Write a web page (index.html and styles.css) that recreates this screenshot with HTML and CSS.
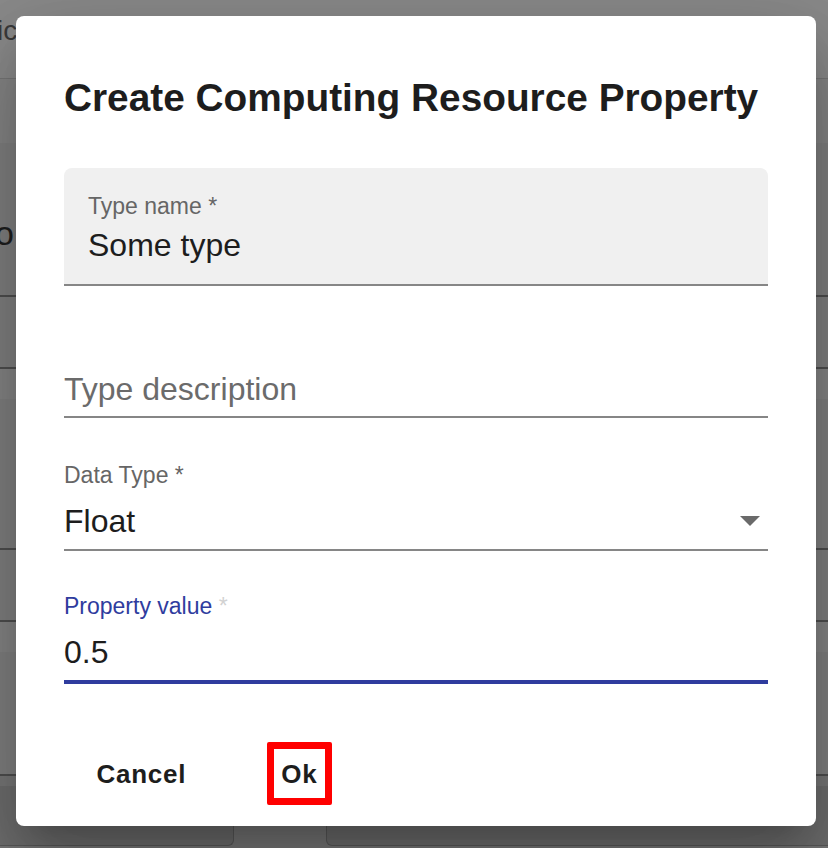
FILE: index.html
```html
<!DOCTYPE html>
<html lang="en">
<head>
<meta charset="utf-8">
<title>Create Computing Resource Property</title>
<link rel="stylesheet" href="styles.css">
</head>
<body>
<div class="page">
  <div class="bg-head"><span class="bg-word">ic</span></div>
  <div class="bg-band-top"></div>
  <div class="bg-row bg-row-first"><span class="bg-word bg-word-o">o</span></div>
  <div class="bg-row bg-row-short"></div>
  <div class="bg-band"></div>
  <div class="bg-row bg-row-mid"></div>
  <div class="bg-row bg-row-short"></div>
  <div class="bg-band"></div>
  <div class="bg-row bg-row-last"></div>
  <div class="bg-foot">
    <div class="bg-card bg-card-a"></div>
    <div class="bg-card bg-card-b"></div>
  </div>
</div>

<div class="dialog" role="dialog">
  <h2 class="title">Create Computing Resource Property</h2>

  <div class="field filled">
    <div class="label">Type name *</div>
    <div class="value">Some type</div>
  </div>

  <div class="field standard">
    <div class="placeholder">Type description</div>
  </div>

  <div class="field select">
    <div class="label">Data Type *</div>
    <div class="value-row">
      <div class="value">Float</div>
      <svg class="arrow" width="20" height="10" viewBox="7 10 10 5"><path d="M7 10l5 5 5-5z" fill="#6a6a6a"/></svg>
    </div>
  </div>

  <div class="field focused">
    <div class="label">Property value <span class="ast">*</span></div>
    <div class="value value-gap">0.5</div>
  </div>

  <div class="actions">
    <button class="btn">Cancel</button>
    <button class="btn btn-ok">Ok</button>
  </div>
</div>
</body>
</html>
```

FILE: styles.css
```css
* {
  box-sizing: border-box;
  margin: 0;
  padding: 0;
}

html, body {
  width: 828px;
  height: 848px;
  overflow: hidden;
}

body {
  font-family: "Liberation Sans", Arial, Helvetica, sans-serif;
  background: #808080;
  position: relative;
}

/* dimmed page behind the modal */
.page {
  height: 848px;
  display: flex;
  flex-direction: column;
}

.page > * {
  flex-shrink: 0;
}

.bg-head {
  height: 79px;
  background: #8a8a8a;
  border-bottom: 1px solid #767676;
  padding-top: 14px;
}

.bg-word {
  display: block;
  font-size: 28px;
  line-height: 34px;
  color: #3a3a3a;
  margin-left: -3px;
}

.bg-word-o {
  font-size: 34px;
  color: #1e1e1e;
  margin-left: -5px;
  padding-top: 73px;
}

.bg-band-top {
  height: 64px;
  background: #858585;
}

.bg-band {
  height: 30px;
  background: #858585;
}

.bg-row {
  background: #808080;
  border-bottom: 2px solid #4f4f4f;
}

.bg-row-first { height: 154px; }
.bg-row-short { height: 72px; }
.bg-row-mid { height: 151px; }
.bg-row-last { height: 124px; }

.page > .bg-foot {
  flex: 1 1 auto;
  position: relative;
  background: #777;
}

.bg-card {
  position: absolute;
  bottom: 2px;
  height: 60px;
  border: 1px solid #5a5a5a;
  border-top: none;
  background: #6e6e6e;
}

.bg-card-a {
  left: -10px;
  width: 244px;
  border-radius: 0 0 6px 0;
}

.bg-card-b {
  left: 326px;
  right: -10px;
  border-radius: 0 0 0 6px;
}

/* modal */
.dialog {
  position: absolute;
  left: 16px;
  top: 16px;
  width: 800px;
  height: 810px;
  background: #fff;
  border-radius: 8px;
  padding: 0 48px 21px;
  display: flex;
  flex-direction: column;
  box-shadow:
    0 22px 30px -14px rgba(0, 0, 0, 0.2),
    0 48px 76px 6px rgba(0, 0, 0, 0.14),
    0 18px 92px 16px rgba(0, 0, 0, 0.12);
}

.title {
  margin-top: 58px;
  font-size: 38.8px;
  line-height: 48px;
  font-weight: 700;
  color: #1d1d1d;
  white-space: nowrap;
}

.label {
  font-size: 23px;
  line-height: 28px;
  color: #666;
}

.value {
  font-size: 32px;
  line-height: 38px;
  color: #1d1d1d;
}

.filled {
  margin-top: 46px;
  background: #f0f0f0;
  border-radius: 8px 8px 0 0;
  padding: 24px 24px 20px;
  border-bottom: 2px solid #868686;
}

.filled .value {
  margin-top: 6px;
}

.standard {
  margin-top: 84px;
  padding-bottom: 8px;
  border-bottom: 2px solid #868686;
}

.placeholder {
  font-size: 32px;
  line-height: 38px;
  color: #6b6b6b;
}

.select {
  margin-top: 43px;
  padding-bottom: 9px;
  border-bottom: 2px solid #868686;
}

.value-row {
  margin-top: 13px;
  display: flex;
  justify-content: space-between;
  align-items: center;
}

.arrow {
  margin-right: 8px;
}

.focused {
  margin-top: 41px;
  padding-bottom: 9px;
  border-bottom: 4px solid #2f3c9e;
}

.focused .label {
  color: #2f3c9e;
}

.ast {
  color: #d2d2d2;
}

.value-gap {
  margin-top: 13px;
}

.actions {
  margin-top: 58px;
  display: flex;
  padding-left: 18px;
}

.btn {
  font-family: inherit;
  font-size: 26px;
  line-height: 32px;
  font-weight: 700;
  letter-spacing: 0.75px;
  color: #1d1d1d;
  background: none;
  border: 7px solid transparent;
  padding: 8.5px 7.5px;
  cursor: pointer;
}

.btn-ok {
  margin-left: 66px;
  border-color: #ff0000;
  border-radius: 2px;
}
```
